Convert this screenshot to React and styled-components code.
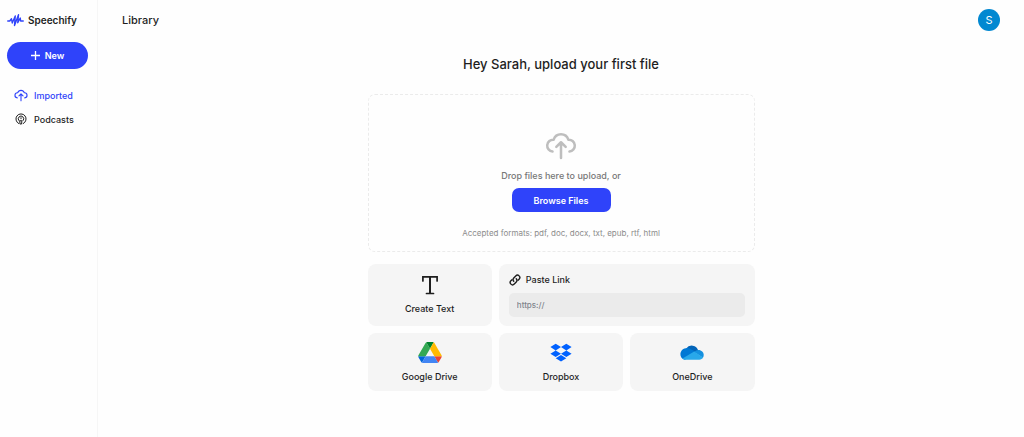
import { useState } from 'react';
import styled, { createGlobalStyle } from 'styled-components';

export default function App() {
  const [link, setLink] = useState('');

  return (
    <>
      <GlobalStyle />
      <Page>
        <Sidebar>
          <Logo href="#">
            <WaveIcon />
            Speechify
          </Logo>
          <NewButton type="button">
            <PlusIcon />
            New
          </NewButton>
          <Nav>
            <NavLink href="#imported" $active>
              <CloudIcon size={14} />
              Imported
            </NavLink>
            <NavLink href="#podcasts">
              <PodcastIcon />
              Podcasts
            </NavLink>
          </Nav>
        </Sidebar>
        <Main>
          <TopBar>
            <PageTitle>Library</PageTitle>
            <Avatar type="button" aria-label="Account">
              S
            </Avatar>
          </TopBar>
          <Content>
            <Greeting>Hey Sarah, upload your first file</Greeting>
            <DropZone>
              <CloudIcon size={32} />
              <DropText>Drop files here to upload, or</DropText>
              <BrowseButton type="button">Browse Files</BrowseButton>
              <Formats>
                Accepted formats: pdf, doc, docx, txt, epub, rtf, html
              </Formats>
            </DropZone>
            <Sources>
              <SourceCard type="button">
                <TextIcon />
                Create Text
              </SourceCard>
              <LinkCard>
                <LinkLabel htmlFor="link">
                  <LinkIcon />
                  Paste Link
                </LinkLabel>
                <LinkInput
                  id="link"
                  type="text"
                  placeholder="https://"
                  value={link}
                  onChange={(event) => setLink(event.target.value)}
                />
              </LinkCard>
              <SourceCard type="button">
                <DriveIcon />
                Google Drive
              </SourceCard>
              <SourceCard type="button">
                <DropboxIcon />
                Dropbox
              </SourceCard>
              <SourceCard type="button">
                <OneDriveIcon />
                OneDrive
              </SourceCard>
            </Sources>
          </Content>
        </Main>
      </Page>
    </>
  );
}

function WaveIcon() {
  return (
    <svg width="17" height="14" viewBox="0 0 34 28" fill="none" stroke="#2f43fa">
      <path
        d="M1.500 16h4l3.500-4.500 1.500 8.500 6-14-1.500 19L23 3.500l-1.500 16L26.500 10l.8 6h5.200"
        strokeWidth="2.800"
        strokeLinecap="round"
        strokeLinejoin="round"
      />
    </svg>
  );
}

function PlusIcon() {
  return (
    <svg width="9" height="9" viewBox="0 0 9 9" stroke="#fff" strokeWidth="1.300">
      <path d="M4.500 0v9M0 4.500h9" />
    </svg>
  );
}

function CloudIcon({ size }) {
  return (
    <svg
      width={size}
      height={size}
      viewBox="0 0 28 28"
      fill="none"
      stroke="currentColor"
      strokeWidth="2.200"
      strokeLinecap="round"
      strokeLinejoin="round"
    >
      <path d="M6.600 19.700A5.100 5.100 0 0 1 7.600 9.400 6.700 6.700 0 0 1 20.400 9.400 5.100 5.100 0 0 1 21.400 19.700" />
      <path d="M14 25.400V12M9.900 15.700 14 11.600l4.100 4.100" />
    </svg>
  );
}

function PodcastIcon() {
  return (
    <svg
      width="14"
      height="14"
      viewBox="0 0 28 28"
      fill="none"
      stroke="currentColor"
      strokeWidth="2"
      strokeLinecap="round"
      strokeLinejoin="round"
    >
      <path d="M9.500 23.200a10.200 10.200 0 1 1 9 0" />
      <path d="M9.800 17.200a5.500 5.500 0 1 1 8.400 0" />
      <path d="M14 11.500v2M12.200 17.500h3.600l-.6 6.500h-2.400z" />
    </svg>
  );
}

function TextIcon() {
  return (
    <svg width="20" height="20" viewBox="0 0 20 20" fill="none" stroke="#1e1e1e">
      <path d="M2.900 6V1.900h14.200V6M6.500 18.500h7" strokeWidth="1.700" strokeLinecap="round" />
      <path d="M10 2v16.500" strokeWidth="2" />
    </svg>
  );
}

function LinkIcon() {
  return (
    <svg
      width="12"
      height="12"
      viewBox="0 0 24 24"
      fill="none"
      stroke="currentColor"
      strokeWidth="2.800"
      strokeLinecap="round"
      strokeLinejoin="round"
    >
      <path d="M9.500 14.500a5 5 0 0 1 0-6.500l4-4.200a4.700 4.700 0 0 1 6.700 6.600l-2.200 2.300" />
      <path d="M14.500 9.500a5 5 0 0 1 0 6.500l-4 4.200a4.700 4.700 0 0 1-6.700-6.600l2.200-2.300" />
    </svg>
  );
}

function DriveIcon() {
  return (
    <svg width="24" height="21" viewBox="0 0 87.3 78">
      <path fill="#0066da" d="m6.600 66.850 3.850 6.650c.8 1.400 1.950 2.500 3.300 3.300l13.750-23.800h-27.500c0 1.550.4 3.100 1.200 4.500z" />
      <path fill="#34a853" d="m43.650 25-13.750-23.800c-1.350.8-2.500 1.900-3.300 3.300l-25.400 44a9.060 9.060 0 0 0 -1.200 4.500h27.500z" />
      <path fill="#ea4335" d="m73.550 76.800c1.350-.8 2.500-1.900 3.300-3.300l1.600-2.750 7.650-13.250c.8-1.400 1.200-2.950 1.200-4.500h-27.502l5.852 11.500z" />
      <path fill="#00832d" d="m43.650 25 13.750-23.800c-1.350-.8-2.900-1.200-4.500-1.200h-18.500c-1.600 0-3.150.45-4.500 1.200z" />
      <path fill="#4285f4" d="m59.800 53h-32.300l-13.750 23.800c1.350.8 2.900 1.200 4.500 1.200h50.800c1.600 0 3.150-.45 4.500-1.200z" />
      <path fill="#ffba00" d="m73.400 26.500-12.700-22c-.8-1.400-1.950-2.500-3.300-3.300l-13.750 23.800 16.150 28h27.450c0-1.550-.4-3.100-1.200-4.500z" />
    </svg>
  );
}

function DropboxIcon() {
  return (
    <svg width="24" height="21" viewBox="0 0 24 21" fill="#0061ff">
      <path d="M6.700 1.800 12 5.100 6.700 8.400 1.400 5.100zM17.300 1.800l5.300 3.300-5.300 3.300L12 5.100zM6.700 8.400l5.300 3.300-5.300 3.300-5.300-3.300zM17.300 8.400l5.300 3.300-5.300 3.300-5.300-3.300zM12 12.900l5.300 3.300-5.300 3.300-5.300-3.300z" />
    </svg>
  );
}

function OneDriveIcon() {
  return (
    <svg width="24" height="21" viewBox="0 0 24 21">
      <path fill="#0364b8" d="M6.200 6.600A6.700 6.700 0 0 1 18.200 8.400L15 12 6.500 8z" />
      <path fill="#0078d4" d="M4.800 17.700A5.500 5.500 0 0 1 .4 12.300C.4 8.900 3.300 6 7.200 6c2.300 0 3.800 1.200 7.800 3.600L12 14z" />
      <path fill="#1490df" d="M14 9.900c1.500-1 3-1.900 4.500-1.900 3 0 5.200 2.400 5.200 5 0 1-.3 2-.8 2.700z" />
      <path fill="#28a8ea" d="M2.500 16.400 14.200 9.600l8.900 5.900c-.8 1.300-2.100 2.200-3.800 2.200H5.700c-1.300 0-2.400-.5-3.200-1.300z" />
    </svg>
  );
}

const GlobalStyle = createGlobalStyle`
  * {
    box-sizing: border-box;
  }

  body {
    margin: 0;
    background-color: #fefefe;
    color: #1e1e1e;
    font-family: Inter, 'Liberation Sans', sans-serif;
    font-size: 9px;
    font-weight: 500;
  }

  button,
  input {
    border: none;
    padding: 0;
    color: inherit;
    font: inherit;
  }

  button {
    cursor: pointer;
  }

  svg {
    display: block;
    flex-shrink: 0;
  }
`;

const Page = styled.div`
  display: flex;
  min-height: 100vh;
`;

const Sidebar = styled.aside`
  width: 98px;
  flex-shrink: 0;
  padding: 12px 9px 0 7px;
  border-right: 1px solid #f6f6f6;
`;

const Logo = styled.a`
  display: flex;
  align-items: center;
  gap: 4px;
  height: 16px;
  color: #1e1e1e;
  font-size: 10px;
  font-weight: 600;
  text-decoration: none;
`;

const NewButton = styled.button`
  display: flex;
  align-items: center;
  justify-content: center;
  gap: 5px;
  width: 100%;
  height: 27px;
  margin-top: 14px;
  border-radius: 14px;
  background-color: #2f43fa;
  color: #fff;
  font-weight: 600;
`;

const Nav = styled.nav`
  display: grid;
  margin-top: 14px;
`;

const NavLink = styled.a`
  display: flex;
  align-items: center;
  gap: 6px;
  height: 24px;
  padding-left: 7px;
  color: ${({ $active }) => ($active ? '#2f43fa' : '#1e1e1e')};
  text-decoration: none;
`;

const Main = styled.main`
  flex: 1;
`;

const TopBar = styled.header`
  display: flex;
  align-items: center;
  justify-content: space-between;
  height: 40px;
  padding: 0 24px;
`;

const PageTitle = styled.h1`
  margin: 0;
  font-size: 11px;
  font-weight: 500;
`;

const Avatar = styled.button`
  width: 22px;
  height: 22px;
  border-radius: 50%;
  background-color: #0288d1;
  color: #fff;
  font-size: 11px;
  font-weight: 400;
`;

const Content = styled.section`
  width: 100%;
  max-width: 387px;
  margin: 0 auto;
  padding: 14px 0;
`;

const Greeting = styled.h2`
  margin: 0 0 20px;
  font-size: 13px;
  font-weight: 500;
  line-height: 20px;
  text-align: center;
`;

const DropZone = styled.div`
  display: flex;
  flex-direction: column;
  align-items: center;
  padding: 34px 0 12px;
  border: 1px dashed #ebebeb;
  border-radius: 7px;
  color: #bebebe;
`;

const DropText = styled.p`
  margin: 9px 0 6px;
  line-height: 12px;
  color: #777;
`;

const BrowseButton = styled.button`
  width: 99px;
  height: 24px;
  border-radius: 7px;
  background-color: #2f43fa;
  color: #fff;
  font-weight: 600;
`;

const Formats = styled.p`
  margin: 15px 0 0;
  font-size: 8px;
  font-weight: 400;
  line-height: 12px;
  color: #8c8c8c;
`;

const Sources = styled.div`
  display: grid;
  grid-template-columns: repeat(3, 1fr);
  gap: 7px;
  margin-top: 12px;
`;

const SourceCard = styled.button`
  display: flex;
  flex-direction: column;
  align-items: center;
  justify-content: center;
  gap: 8px;
  min-height: 58px;
  border-radius: 8px;
  background-color: #f5f5f5;
  line-height: 12px;
`;

const LinkCard = styled.div`
  grid-column: span 2;
  padding: 10px 10px 9px;
  border-radius: 8px;
  background-color: #f5f5f5;
`;

const LinkLabel = styled.label`
  display: flex;
  align-items: center;
  gap: 5px;
  line-height: 12px;
`;

const LinkInput = styled.input`
  display: block;
  width: 100%;
  height: 24px;
  margin-top: 7px;
  padding: 0 8px;
  border-radius: 5px;
  background-color: #ebebeb;
  font-size: 8px;

  &::placeholder {
    color: #80858c;
    opacity: 1;
  }
`;
